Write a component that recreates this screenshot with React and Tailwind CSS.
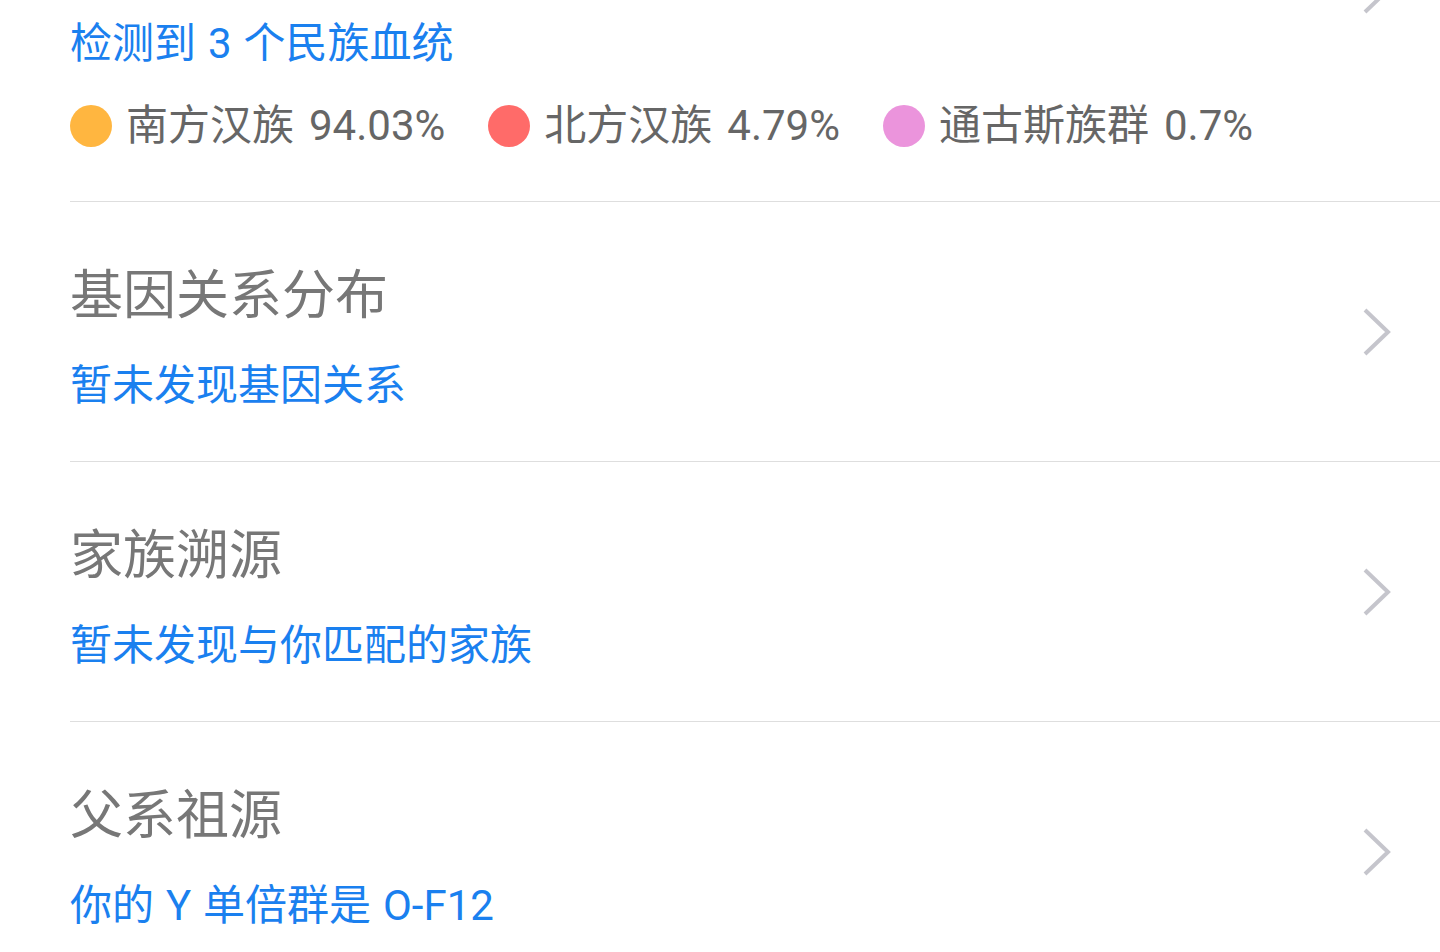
import React from "react";

const FONT = { fontFamily: "Roboto, 'Noto Sans CJK SC', 'Noto Sans', sans-serif" };

function Chevron() {
  return (
    <svg width="30" height="50" viewBox="0 0 30 50" className="shrink-0" fill="none">
      <path d="M3 3 L26 25 L3 47" stroke="#c5c5cc" strokeWidth="4" strokeLinecap="butt" strokeLinejoin="miter" />
    </svg>
  );
}

const legend = [
  { name: "南方汉族", pct: "94.03%", color: "bg-[#ffb640]" },
  { name: "北方汉族", pct: "4.79%", color: "bg-[#ff6b69]" },
  { name: "通古斯族群", pct: "0.7%", color: "bg-[#eb94dc]" },
];

function Row({ title, sub, children, className = "", bodyClass = "pt-[64px] pb-[45px]" }) {
  return (
    <div className={"flex items-center border-b border-[#dedede] ml-[70px] pr-[48px] " + className}>
      <div className={"flex-1 min-w-0 " + bodyClass}>
        <div className="text-[53px] leading-[60px] text-[#777777]">{title}</div>
        <div className="mt-[30px] text-[42px] leading-[60px] text-[#1a80ef] [word-spacing:1.5px]">{sub}</div>
        {children}
      </div>
      <Chevron />
    </div>
  );
}

export default function App() {
  return (
    <div className="w-[1440px] h-[952px] overflow-hidden bg-white" style={FONT}>
      <Row title="祖源成分" sub="检测到 3 个民族血统" className="-mt-[221px]" bodyClass="pt-[145px] pb-[45px]">
        <div className="mt-[22px] flex items-center h-[60px]">
          {legend.map((l) => (
            <div key={l.name} className="flex items-center mr-[43px]">
              <span className={"w-[42px] h-[42px] rounded-full " + l.color} />
              <span className="ml-[14px] text-[42px] leading-[60px] text-[#666666]">{l.name}</span>
              <span className="ml-[15px] text-[42px] leading-[60px] text-[#666666]">{l.pct}</span>
            </div>
          ))}
        </div>
      </Row>
      <Row title="基因关系分布" sub="暂未发现基因关系" />
      <Row title="家族溯源" sub="暂未发现与你匹配的家族" />
      <Row title="父系祖源" sub="你的 Y 单倍群是 O-F12" />
    </div>
  );
}
